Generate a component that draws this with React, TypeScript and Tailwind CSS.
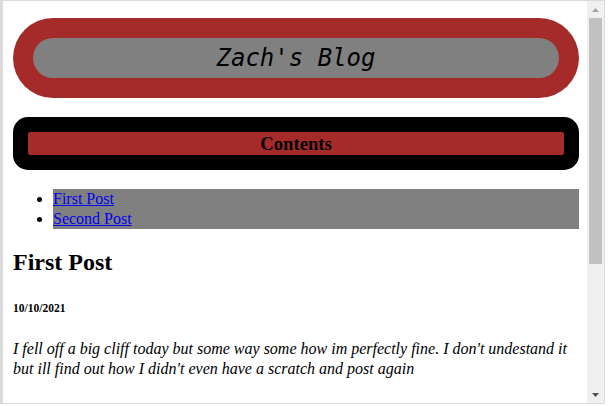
import React from 'react';

const serif = "font-['Liberation_Serif','Times_New_Roman',serif]";

const ScrollBar: React.FC = () => (
  <div className="flex w-[17px] shrink-0 flex-col bg-[#f0f0f0]">
    <div className="flex h-[17px] items-center justify-center">
      <svg width="7" height="4" viewBox="0 0 7 4">
        <path d="M0 4 L3.5 0 L7 4 Z" fill="#a3a3a3" />
      </svg>
    </div>
    <div className="mx-[2px] h-[246px] bg-[#c1c1c1]" />
    <div className="flex-1" />
    <div className="flex h-[17px] items-center justify-center">
      <svg width="7" height="4" viewBox="0 0 7 4">
        <path d="M0 0 L7 0 L3.5 4 Z" fill="#505050" />
      </svg>
    </div>
  </div>
);

const App: React.FC = () => {
  const posts = ['First Post', 'Second Post'];

  return (
    <div className="h-[406px] w-[614px] overflow-hidden bg-white">
      <div className="flex h-[404px] w-[605px] border-b border-l-[3px] border-r border-t border-[#dadada]">
        <main className={`min-w-0 flex-1 overflow-hidden pl-[10px] pr-[8px] pt-[17px] text-black ${serif}`}>
          <header className="h-[80px] rounded-full bg-[#a52a2a] p-[20px]">
            <div className="flex h-[40px] items-center justify-center rounded-full bg-[#808080]">
              <h1 className="font-['DejaVu_Sans_Mono',monospace] text-[24px] italic leading-[28px]">
                Zach's Blog
              </h1>
            </div>
          </header>

          <nav className="mt-[19px] rounded-[15px] bg-black p-[15px]">
            <h3 className="h-[23px] rounded-[2px] bg-[#a52a2a] text-center text-[18.72px] font-bold leading-[23px]">
              Contents
            </h3>
          </nav>

          <ul className="mt-[19px] list-disc pl-[40px] text-[16px] leading-[20px]">
            {posts.map((p) => (
              <li key={p} className="bg-[#808080]">
                <a href="#" className="text-[#0000ee] underline">
                  {p}
                </a>
              </li>
            ))}
          </ul>

          <article>
            <h2 className="mt-[19px] text-[24px] font-bold leading-[28px]">First Post</h2>
            <h6 className="mt-[26px] text-[11.5px] font-bold leading-[13px]">10/10/2021</h6>
            <p className="mt-[24px] text-[16px] italic leading-[20px]">
              I fell off a big cliff today but some way some how im perfectly fine. I don't undestand it
              but ill find out how I didn't even have a scratch and post again
            </p>
          </article>
        </main>
        <ScrollBar />
      </div>
    </div>
  );
};

export default App;
